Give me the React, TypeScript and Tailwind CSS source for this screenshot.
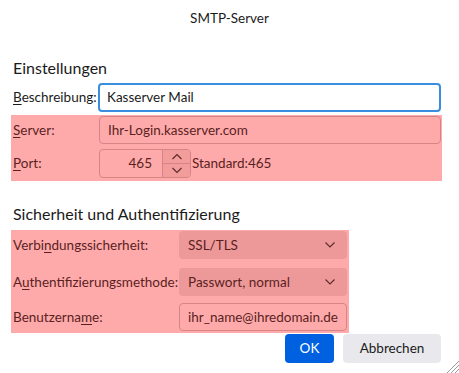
import React from "react";

const Chevron = () => (
  <svg width="12" height="8" viewBox="0 0 12 8" className="shrink-0">
    <polyline points="1.5,1.5 6,6 10.5,1.5" fill="none" stroke="#5a2a2a" strokeWidth="1.1" />
  </svg>
);

const U = ({ children }: { children: React.ReactNode }) => <span className="underline underline-offset-2">{children}</span>;

export default function App() {
  return (
    <div
      className="relative w-[459px] h-[373px] bg-white text-[13.5px] text-[#1b1b1b] overflow-hidden"
      style={{ fontFamily: 'Lato, "Noto Sans", sans-serif' }}
    >
      <div className="h-[36px] flex items-center justify-center text-[13.5px]">SMTP-Server</div>

      <div className="pl-[11px]">
        <div className="mt-[22px] h-[20px] flex items-center pl-[2px] text-[16px]">Einstellungen</div>

        <div className="mt-[5px] flex items-center pl-[2px] h-[29px]">
          <div className="w-[85px] whitespace-nowrap">
            <U>B</U>eschreibung:
          </div>
          <div className="w-[343px] h-[29px] border-2 border-[#3a8ee0] rounded-[4px] flex items-center pl-[7px]">
            Kasserver Mail
          </div>
        </div>

        <div className="mt-[3px] w-[431px] h-[66px] bg-[#ffaaaa] pl-[2px] pt-[1px] text-[#5a1f1f]">
          <div className="flex items-center h-[28px]">
            <div className="w-[86px]">
              <U>S</U>erver:
            </div>
            <div className="w-[342px] h-[28px] border border-[#d58585] rounded-[4px] flex items-center pl-[8px]">
              Ihr-Login.kasserver.com
            </div>
          </div>
          <div className="mt-[5px] flex items-center h-[29px]">
            <div className="w-[86px]">
              <U>P</U>ort:
            </div>
            <div className="w-[92px] h-[29px] border border-[#d58585] rounded-[4px] flex items-stretch overflow-hidden">
              <div className="flex-1 flex items-center justify-end pr-[10px]">465</div>
              <div className="w-[28px] flex flex-col border-l border-[#d58585] bg-[#f29c9c]">
                <div className="flex-1 flex items-center justify-center border-b border-[#d58585]">
                  <svg width="12" height="7" viewBox="0 0 12 7">
                    <polyline points="1.5,6 6,1.5 10.5,6" fill="none" stroke="#5a2a2a" strokeWidth="1.1" />
                  </svg>
                </div>
                <div className="flex-1 flex items-center justify-center">
                  <svg width="12" height="7" viewBox="0 0 12 7">
                    <polyline points="1.5,1 6,5.5 10.5,1" fill="none" stroke="#5a2a2a" strokeWidth="1.1" />
                  </svg>
                </div>
              </div>
            </div>
            <div className="ml-[1px]">Standard:465</div>
          </div>
        </div>

        <div className="mt-[23px] h-[20px] flex items-center pl-[2px] text-[16px]">
          Sicherheit und Authentifizierung
        </div>

        <div className="mt-[6px] w-[338px] h-[103px] bg-[#ffaaaa] pl-[2px] pt-[1px] text-[#5a1f1f]">
          <div className="flex items-center h-[28px]">
            <div className="w-[166px] whitespace-nowrap">
              Verbi<U>n</U>dungssicherheit:
            </div>
            <div className="w-[168px] h-[28px] rounded-[4px] bg-[#ee9999] flex items-center justify-between pl-[9px] pr-[11px]">
              <span>SSL/TLS</span>
              <Chevron />
            </div>
          </div>
          <div className="mt-[9px] flex items-center h-[28px]">
            <div className="w-[166px] whitespace-nowrap">
              A<U>u</U>thentifizierungsmethode:
            </div>
            <div className="w-[168px] h-[28px] rounded-[4px] bg-[#ee9999] flex items-center justify-between pl-[9px] pr-[11px]">
              <span>Passwort, normal</span>
              <Chevron />
            </div>
          </div>
          <div className="mt-[7px] flex items-center h-[28px]">
            <div className="w-[166px] whitespace-nowrap">
              Benutzerna<U>m</U>e:
            </div>
            <div className="w-[168px] h-[28px] rounded-[4px] border border-[#d58585] flex items-center pl-[8px]">
              ihr_name@ihredomain.de
            </div>
          </div>
        </div>

        <div className="mt-[1px] flex justify-end gap-[9px] pr-[18px]">
          <button className="w-[49px] h-[29px] rounded-[4px] bg-[#0061e0] text-white text-[13.5px]">OK</button>
          <button className="w-[98px] h-[29px] rounded-[4px] bg-[#e9e9ed] text-[#1b1b1b] text-[13.5px]">Abbrechen</button>
        </div>
      </div>

      <svg className="absolute right-0 bottom-0" width="14" height="14" viewBox="0 0 14 14">
        <line x1="14" y1="2" x2="2" y2="14" stroke="#9a9a9a" strokeWidth="1" />
        <line x1="14" y1="6" x2="6" y2="14" stroke="#9a9a9a" strokeWidth="1" />
        <line x1="14" y1="10" x2="10" y2="14" stroke="#9a9a9a" strokeWidth="1" />
      </svg>
    </div>
  );
}
